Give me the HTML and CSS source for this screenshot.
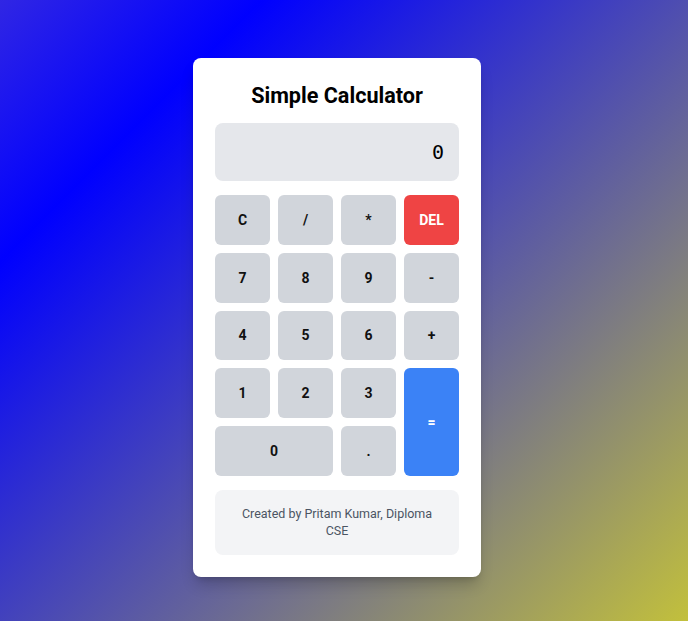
FILE: index.html
```html
<!DOCTYPE html>
<html lang="en">
<head>
<meta charset="utf-8">
<title>Simple Calculator</title>
<link rel="stylesheet" href="styles.css">
</head>
<body>
<main class="page">
  <div class="card">
    <h1 class="title">Simple Calculator</h1>
    <div class="display">0</div>
    <div class="keys">
      <button class="key">C</button>
      <button class="key">/</button>
      <button class="key">*</button>
      <button class="key key-del">DEL</button>
      <button class="key">7</button>
      <button class="key">8</button>
      <button class="key">9</button>
      <button class="key">-</button>
      <button class="key">4</button>
      <button class="key">5</button>
      <button class="key">6</button>
      <button class="key">+</button>
      <button class="key">1</button>
      <button class="key">2</button>
      <button class="key">3</button>
      <button class="key key-eq">=</button>
      <button class="key key-zero">0</button>
      <button class="key">.</button>
    </div>
    <div class="footer">Created by Pritam Kumar, Diploma CSE</div>
  </div>
</main>
</body>
</html>
```
FILE: styles.css
```css
html, body {
  margin: 0;
  padding: 0;
  height: 100%;
}
body {
  font-family: Roboto, "Liberation Sans", sans-serif;
  background: linear-gradient(135deg, #3026e4 0%, #0000ff 20%, #c2c03c 100%);
}
.page {
  min-height: 100%;
  box-sizing: border-box;
  display: flex;
  justify-content: center;
  align-items: flex-start;
  padding: 58px 14px 0 0;
}
.card {
  width: 288px;
  box-sizing: border-box;
  background: #ffffff;
  border-radius: 8px;
  padding: 22px;
  box-shadow: 0 10px 15px -3px rgba(0,0,0,0.2), 0 4px 6px -4px rgba(0,0,0,0.2);
}
.title {
  margin: 0 0 11px;
  text-align: center;
  font-size: 21.6px;
  line-height: 32px;
  font-weight: 700;
  color: #000;
}
.display {
  height: 58px;
  box-sizing: border-box;
  background: #e5e7eb;
  border-radius: 8px;
  padding: 0 15px;
  display: flex;
  align-items: center;
  justify-content: flex-end;
  font-family: "DejaVu Sans Mono", monospace;
  font-size: 20px;
  color: #000;
  margin-bottom: 14px;
}
.keys {
  display: grid;
  grid-template-columns: repeat(4, 55px);
  grid-auto-rows: 49.8px;
  gap: 8px;
}
.key {
  border: none;
  border-radius: 6px;
  background: #d1d5db;
  font-family: Roboto, "Liberation Sans", sans-serif;
  font-weight: 700;
  font-size: 14px;
  color: #111;
  padding: 0;
}
.key-del {
  background: #ef4444;
  color: #fff;
}
.key-eq {
  background: #3b82f6;
  color: #fff;
  grid-row: span 2;
}
.key-zero {
  grid-column: span 2;
}
.footer {
  margin-top: 14px;
  background: #f3f4f6;
  border-radius: 8px;
  padding: 15px 16px;
  text-align: center;
  font-size: 12.5px;
  line-height: 17.5px;
  color: #4b5563;
}
```
